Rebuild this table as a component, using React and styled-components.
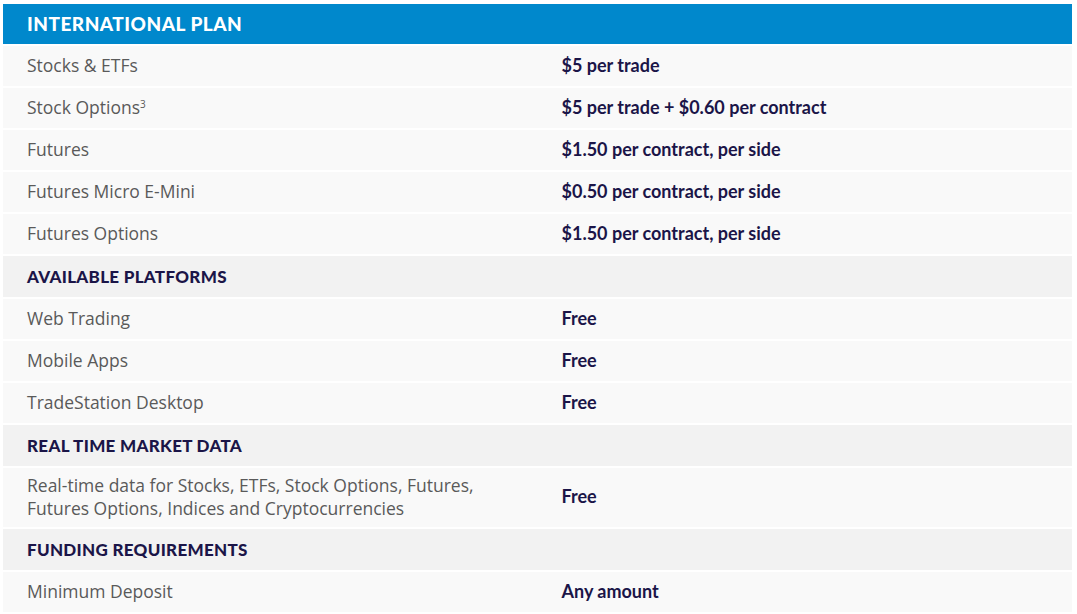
import React from "react";
import styled, { createGlobalStyle } from "styled-components";

const Global = createGlobalStyle`
  html, body { margin: 0; padding: 0; background: #fff; }
  body { font-family: "Open Sans", sans-serif; }
`;

const Wrap = styled.div`
  padding: 4px 5px 0 3px;
`;

const Table = styled.div`
  display: flex;
  flex-direction: column;
  gap: 2px;
`;

const Header = styled.div`
  background: #0088cc;
  height: 40px;
  display: flex;
  align-items: center;
  padding: 0 24px 2px;
  box-sizing: border-box;
  color: #fff;
  font-family: "Lato", sans-serif;
  font-weight: 900;
  font-size: 19px;
  letter-spacing: 0.5px;
`;

const Section = styled.div`
  background: #f2f2f2;
  height: 41px;
  display: flex;
  align-items: center;
  padding: 0 24px;
  color: #1b1548;
  font-family: "Lato", sans-serif;
  font-weight: 900;
  font-size: 17px;
  letter-spacing: 0.3px;
`;

const Row = styled.div`
  background: #f9f9f9;
  min-height: 40px;
  display: grid;
  grid-template-columns: 1fr 1fr;
  align-items: center;
  padding: ${(p) => (p.$tall ? "6px 0 7px" : "0")};
`;

const Label = styled.div`
  padding: 0 24px;
  color: #5a5a5a;
  font-size: 17.5px;
  line-height: 23px;
  margin-top: ${(p) => (p.$tall ? "0" : "-2px")};
  & sup {
    font-size: 10px;
    vertical-align: 6px;
    line-height: 0;
  }
`;

const Value = styled.div`
  padding: 0 24px;
  color: #1b1548;
  font-family: "Lato", sans-serif;
  font-weight: 700;
  font-size: 18px;
  line-height: 23px;
  margin-top: -1px;
`;

const data = [
  { type: "row", label: "Stocks & ETFs", value: "$5 per trade" },
  { type: "row", label: <>Stock Options<sup>3</sup></>, value: "$5 per trade + $0.60 per contract" },
  { type: "row", label: "Futures", value: "$1.50 per contract, per side" },
  { type: "row", label: "Futures Micro E-Mini", value: "$0.50 per contract, per side" },
  { type: "row", label: "Futures Options", value: "$1.50 per contract, per side" },
  { type: "section", label: "AVAILABLE PLATFORMS" },
  { type: "row", label: "Web Trading", value: "Free" },
  { type: "row", label: "Mobile Apps", value: "Free" },
  { type: "row", label: "TradeStation Desktop", value: "Free" },
  { type: "section", label: "REAL TIME MARKET DATA" },
  {
    type: "row",
    tall: true,
    label: (
      <>
        Real-time data for Stocks, ETFs, Stock Options, Futures,
        <br />
        Futures Options, Indices and Cryptocurrencies
      </>
    ),
    value: "Free",
  },
  { type: "section", label: "FUNDING REQUIREMENTS" },
  { type: "row", label: "Minimum Deposit", value: "Any amount" },
];

export default function App() {
  return (
    <Wrap>
      <Global />
      <Table>
        <Header>INTERNATIONAL PLAN</Header>
        {data.map((d, i) =>
          d.type === "section" ? (
            <Section key={i}>{d.label}</Section>
          ) : (
            <Row key={i} $tall={d.tall}>
              <Label $tall={d.tall}>{d.label}</Label>
              <Value>{d.value}</Value>
            </Row>
          )
        )}
      </Table>
    </Wrap>
  );
}
